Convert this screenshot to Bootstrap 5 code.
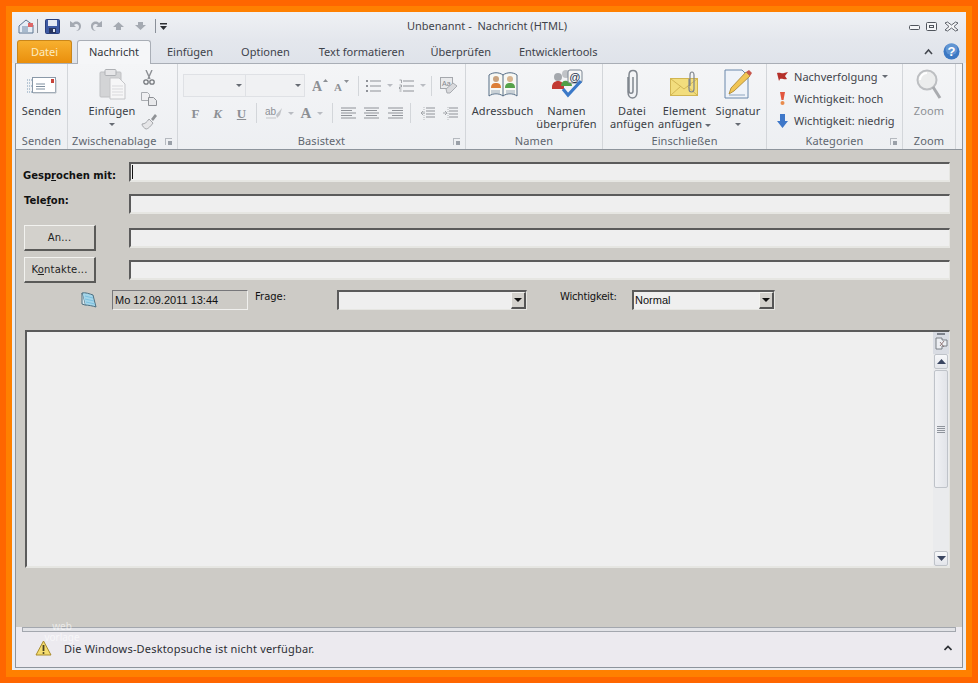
<!DOCTYPE html>
<html lang="de">
<head>
<meta charset="utf-8">
<title>Unbenannt - Nachricht (HTML)</title>
<link href="https://cdn.jsdelivr.net/npm/bootstrap@5.3.0/dist/css/bootstrap.min.css" rel="stylesheet">
<style>
html,body{height:100%;margin:0;overflow:hidden}
body{background:#ff6600;padding:6px;font-family:"Noto Sans",sans-serif;font-size:11px;line-height:13px;color:#3a3e45}
.frame2{background:#ff8000;padding:6px;height:671px;width:966px}
.wnd{height:658px;width:954px;background:#e9ecf1;position:relative;overflow:hidden}
.ttl{height:28px;background:linear-gradient(#eff1f4,#e4e7ed);padding-left:6px;padding-right:7px;position:relative}
.ttl-text{position:absolute;left:0;right:0;top:7px;text-align:center;font-size:11px;color:#3f434a;padding-right:4px}
.tabs{height:23px;background:linear-gradient(#e4e7ed,#dfe3ea);padding-left:5px;padding-right:5px;position:relative}
.tb{color:#3e424a;height:23px;line-height:24px;white-space:nowrap;font-size:11px}
.tb-file{width:55px;text-align:center;background:linear-gradient(#f7b02f,#ea8f0c);border:1px solid #c9861a;border-bottom:0;border-radius:3px 3px 0 0;color:#fcecc0;line-height:22px}
.tb-on{width:74px;margin-left:5px;text-align:center;background:#f5f6f8;border:1px solid #a9aeb6;border-bottom:0;border-radius:3px 3px 0 0;height:24px;position:relative;z-index:2;color:#33363c;line-height:22px}
.mainbox{margin:0 3px;height:605px;border:1px solid #8d949c;border-top-color:#a9aeb6;background:#eceaef}
.rib{height:86px;background:linear-gradient(#f4f5f7,#edeff2);border-bottom:1px solid #8d949c}
.grp{height:85px;border-right:1px solid #d3d6da;position:relative;flex:none}
.grp-body{height:67px}
.grp-pad{padding-top:10px}
.grp-lbl{height:18px;line-height:19px;text-align:center;color:#60666f;letter-spacing:.1px;white-space:nowrap}
.launch{position:absolute;right:5px;bottom:4px;width:7px;height:7px;border:1px solid #b5b9bf;border-width:1px 0 0 1px}
.launch::after{content:"";position:absolute;right:0;bottom:0;width:4px;height:4px;background:#9aa0a8}
.big{display:flex;flex-direction:column;align-items:center;text-align:center;position:relative;letter-spacing:.12px;flex:none;white-space:nowrap}
.big-ico{height:40px;padding-top:5px;display:flex;justify-content:center;align-items:flex-start}
.big-t{line-height:13px}
.caret-g{display:inline-block;width:0;height:0;border:3px solid transparent;border-top:3px solid #666b73;border-bottom:0;vertical-align:middle}
.caret-l{border-top-color:#b9bcc2}
.cg1{width:52px}.cg2{width:110px}.cg3{width:288px}.cg4{width:137px}.cg5{width:164px}.cg6{width:136px}.cg7{width:53px}
.rowa{height:23px;padding-left:5px}
.rowb{height:20px;margin-top:6px;padding-left:5px}
.combo{height:23px;background:#f0f1f3;border:1px solid #dfe1e5;position:relative;flex:none}
.combo .caret-g{position:absolute;right:3px;top:9px}
.sepv{width:1px;height:20px;background:#d3d6da;flex:none}
.fmt{font-family:"Liberation Serif",serif;font-weight:700;color:#8c8f94;font-size:13px;text-align:center;flex:none}
.cat{height:22px;padding-left:9px;letter-spacing:.02px;white-space:nowrap;color:#3f434a}
.cat svg{margin-right:5px;flex:none}
.frm{height:477px;background:#cdcbc6;padding:12px 12px 0 7px;font-family:"DejaVu Sans",sans-serif;font-size:10px;color:#111;flex:none}
.lbl-b{width:106px;font-weight:700;font-size:10px;flex:none;white-space:nowrap}
.sunk{height:20px;background:#efefef;border:2px solid;border-color:#5b5b5b #e6e6e2 #e6e6e2 #5b5b5b;border-width:2px 1px 2px 2px;flex:1 1 auto;position:relative}
.rw{display:flex;align-items:center}
.rw1{height:20px;margin-bottom:12px}
.rw2{height:20px;margin-bottom:11px}
.rw3{height:26px;margin-bottom:6px}
.rw5{height:20px;margin-top:7px;position:relative}
.pbtn{width:72px;height:26px;background:#d3d1cc;border:1px solid;border-color:#f2f2ef #5a5a58 #5a5a58 #f2f2ef;border-width:1px 2px 2px 1px;margin:0 33px 0 1px;text-align:center;line-height:20px;color:#222;flex:none;padding:0;font-size:10px;letter-spacing:.2px;font-family:"DejaVu Sans",sans-serif}
.date-f{width:136px;height:20px;margin-left:15px;background:#cdcbc6;border:1px solid;border-color:#77777a #f0f0ee #f0f0ee #77777a;padding:3px 2px;line-height:13px;white-space:nowrap;flex:none;font-family:"Liberation Sans",sans-serif;font-size:11px}
.sel{height:20px;flex:none;position:relative;background:#efefef;border:2px solid;border-color:#5b5b5b #e6e6e2 #e6e6e2 #5b5b5b;border-width:2px 1px 1px 2px;padding:1px;line-height:14px;font-family:"Liberation Sans",sans-serif;font-size:11px}
.sel-b{position:absolute;right:0;top:0;bottom:0;width:15px;background:#d3d1cc;border:1px solid;border-color:#f2f2ef #555 #555 #f2f2ef;border-width:1px 2px 2px 1px;display:flex;align-items:center;justify-content:center}
.sel-b i{display:block;width:0;height:0;border:4px solid transparent;border-top:4px solid #111;border-bottom:0}
.edit{height:238px;margin:20px 0 0 2px;background:#efefef;border:2px solid;border-color:#5b5b5b #e6e6e2 #e6e6e2 #5b5b5b;border-width:2px 1px 2px 2px;display:flex;justify-content:flex-end}
.sbar{width:16px;background:#eaebed;display:flex;flex-direction:column;align-items:center}
.sb-top{width:16px;height:22px;background:#d9dce3;display:flex;flex-direction:column;align-items:center;padding-top:1px;gap:2px;flex:none}
.sb-dash{width:8px;height:2px;background:#7e838c}
.sb-btn{width:14px;height:15px;border:1px solid #bfc3c9;border-radius:2px;background:linear-gradient(#f7f8fa,#e3e5ea);display:flex;align-items:center;justify-content:center;flex:none}
.sb-thumb{width:14px;height:118px;margin-top:1px;border:1px solid #bfc3c9;border-radius:2px;background:linear-gradient(90deg,#f0f1f4,#e2e4e9);display:flex;align-items:center;justify-content:center;flex:none}
.sb-track{flex:1 1 auto}
.ftr{height:40px;background:#eceaef;position:relative;font-size:11px;line-height:11px;color:#2c2f34;letter-spacing:.18px}
.ftr-bar{height:5px;margin:0 6px;background:#e2e3e7;border:1px solid #a3a7ae}
.ftr-in{padding:2px 10px 0 19px;height:30px}
.wm{position:absolute;left:25px;top:609px;width:50px;text-align:center;color:#fff;opacity:.6;font-size:10px;line-height:11px;z-index:3}
</style>
</head>
<body>
<div class="frame2">
<div class="wnd d-flex flex-column">

  <div class="ttl d-flex align-items-center justify-content-between">
    <div class="d-flex align-items-center">
      <svg width="17" height="17" viewBox="0 0 17 17"><path d="M1 8 8 2l7 5v8H1z" fill="#e6edf5" stroke="#5d7591"/><path d="M4 9h6M4 11h6M4 13h6" stroke="#6b87a6"/><rect x="10" y="5" width="5" height="4" fill="#d66"/></svg>
      <svg style="margin-left:2px" width="1" height="14" viewBox="0 0 1 14"><rect width="1" height="14" fill="#8a9099"/></svg>
      <svg style="margin-left:7px" width="15" height="15" viewBox="0 0 15 15"><rect x=".5" y=".5" width="14" height="14" rx="1" fill="#3d59a3" stroke="#2a3f7c"/><rect x="3" y="1" width="9" height="6" fill="#e4e9f4"/><rect x="4" y="9" width="7" height="5" fill="#27345f"/><rect x="8" y="10" width="2" height="3" fill="#dfe5f2"/></svg>
      <svg style="margin-left:8px" width="14" height="14" viewBox="0 0 14 14"><path d="M2 2v6h6L6 6c2-2 5-1 5 2 0 2-1 3-3 4 4 0 5-3 5-5 0-4-5-6-8-3z" fill="#a5aab2"/></svg>
      <svg style="margin-left:8px" width="14" height="14" viewBox="0 0 14 14"><path d="M12 2v6H6l2-2C6 4 3 5 3 8c0 2 1 3 3 4-4 0-5-3-5-5 0-4 5-6 8-3z" fill="#a5aab2"/></svg>
      <svg style="margin-left:8px" width="13" height="12" viewBox="0 0 13 12"><path d="M6.500 2 12 7H9v3H4V7H1z" fill="#a5aab2"/></svg>
      <svg style="margin-left:9px" width="13" height="12" viewBox="0 0 13 12"><path d="M6.500 10 12 5H9V2H4v3H1z" fill="#a5aab2"/></svg>
      <svg style="margin-left:8px" width="1" height="14" viewBox="0 0 1 14"><rect width="1" height="14" fill="#8a9099"/></svg>
      <svg style="margin-left:4px" width="7" height="7" viewBox="0 0 7 7"><rect y="0" width="7" height="1.500" fill="#2d2f33"/><path d="M0 3h7L3.500 7z" fill="#2d2f33"/></svg>
    </div>
    <div class="ttl-text">Unbenannt -&nbsp; Nachricht (HTML)</div>
    <div class="d-flex align-items-center" style="gap:6px;position:relative">
      <svg width="11" height="11" viewBox="0 0 11 11"><rect x=".5" y="4.500" width="10" height="4" rx="1" fill="#f4f5f7" stroke="#50555d"/></svg>
      <svg width="12" height="11" viewBox="0 0 12 11"><rect x=".5" y="1.500" width="10" height="8" rx="1" fill="#f4f5f7" stroke="#50555d"/><rect x="3.500" y="4.500" width="4" height="2" fill="none" stroke="#50555d"/></svg>
      <svg width="15" height="11" viewBox="0 0 15 11"><path d="M1 2 3.500 1 7.500 4 11.500 1 14 2 10 5.500 14 9 11.500 10 7.500 7 3.500 10 1 9 5 5.500z" fill="#f4f5f7" stroke="#50555d" stroke-width=".9"/></svg>
    </div>
  </div>

  <div class="tabs d-flex">
    <div class="tb tb-file">Datei</div>
    <div class="tb tb-on">Nachricht</div>
    <div class="tb" style="margin-left:16px">Einfügen</div>
    <div class="tb" style="margin-left:28px">Optionen</div>
    <div class="tb" style="margin-left:29px">Text formatieren</div>
    <div class="tb" style="margin-left:26px">Überprüfen</div>
    <div class="tb" style="margin-left:28px">Entwicklertools</div>
    <div class="ms-auto d-flex align-items-center" style="gap:10px;margin-right:1px;margin-top:-1px">
      <svg width="9" height="7" viewBox="0 0 9 7"><path d="M1 6 4.500 2 8 6" fill="none" stroke="#44484f" stroke-width="1.600"/></svg>
      <svg width="17" height="17" viewBox="0 0 17 17"><circle cx="8.500" cy="8.500" r="8" fill="#3c78c3"/><circle cx="8.500" cy="6" r="6" fill="#7aa9dd" opacity=".6"/><text x="8.500" y="13" text-anchor="middle" font-family="Liberation Sans" font-weight="700" font-size="13" fill="#fff">?</text></svg>
    </div>
  </div>

  <div class="mainbox">
    <div class="rib d-flex">

      <div class="grp cg1">
        <div class="grp-body d-flex justify-content-center">
          <div class="big">
            <div class="big-ico" style="padding-top:13px"><svg width="30" height="18" viewBox="0 0 30 18"><path d="M0 3h5M0 6h4M0 9h5M0 12h4M0 15h5" stroke="#7d9bb5" stroke-dasharray="1 1"/><rect x="5.500" y=".5" width="23" height="15" fill="#fff" stroke="#8a99a8"/><path d="M6 16h23V3" fill="none" stroke="#b8bfc6"/><path d="M9 7h9M9 9.500h9M9 12h9" stroke="#7f8f9f"/><rect x="24" y="2" width="3" height="4" fill="#c8443a"/></svg></div>
            <div class="big-t">Senden</div>
          </div>
        </div>
        <div class="grp-lbl">Senden</div>
      </div>

      <div class="grp cg2">
        <div class="grp-body d-flex" style="padding-left:20px">
          <div class="big" style="width:48px">
            <div class="big-ico"><svg width="27" height="31" viewBox="0 0 27 31"><rect x="1" y="3" width="21" height="25" rx="1" fill="#d3d4d6" stroke="#bfc0c3"/><rect x="6" y="0.500" width="11" height="6" rx="1" fill="#e6e6e8" stroke="#aeb0b4"/><path d="M11 9h9l6 6v15H11z" fill="#f6f6f7" stroke="#c5c6c9"/><path d="M13 17h11M13 20h11M13 23h11M13 26h11" stroke="#d9d9dc"/></svg></div>
            <div class="big-t">Einfügen</div>
            <div style="height:13px;line-height:11px"><span class="caret-g"></span></div>
          </div>
          <div class="d-flex flex-column align-items-center" style="width:26px;padding-top:6px;gap:7px">
            <svg width="12" height="15" viewBox="0 0 12 15"><path d="M3 0 7 9M9 0 5 9" stroke="#8c8f94" stroke-width="1.400"/><circle cx="3" cy="12" r="2.200" fill="none" stroke="#75787d" stroke-width="1.300"/><circle cx="9" cy="12" r="2.200" fill="none" stroke="#75787d" stroke-width="1.300"/></svg>
            <svg width="16" height="14" viewBox="0 0 16 14"><path d="M.5.5h6l2 2v6H.5z" fill="#f0f0f2" stroke="#a9acb1"/><path d="M7.500 5.500h5l3 3v5h-8z" fill="#e8e9eb" stroke="#8d9095"/></svg>
            <svg width="17" height="17" viewBox="0 0 17 17"><path d="M1 11c3 0 5-2 7-5l4 4c-2 3-5 6-7 6-2-1-4-3-4-5z" fill="#e6e6e8" stroke="#a5a7ab"/><path d="m10 6 4-5 2 2-4 5z" fill="#8f9296"/></svg>
          </div>
        </div>
        <div class="grp-lbl text-start" style="padding-left:4px">Zwischenablage</div>
        <span class="launch"></span>
      </div>

      <div class="grp cg3">
        <div class="grp-body grp-pad">
          <div class="rowa d-flex align-items-center">
            <div class="combo" style="width:63px"><span class="caret-g"></span></div>
            <div class="combo" style="width:59px;border-left:0"><span class="caret-g"></span></div>
            <svg style="margin-left:7px" width="16" height="15" viewBox="0 0 16 15"><text x="0" y="13" font-family="Liberation Serif" font-weight="700" font-size="14" fill="#8c8f94">A</text><path d="m11 4 2.500-3L16 4z" fill="#8c8f94"/></svg>
            <svg style="margin-left:6px" width="15" height="13" viewBox="0 0 15 13"><text x="0" y="12" font-family="Liberation Serif" font-weight="700" font-size="11" fill="#8c8f94">A</text><path d="m10 1 2.500 3L15 1z" fill="#8c8f94"/></svg>
            <span class="sepv" style="margin-left:9px"></span>
            <svg style="margin-left:7px" width="15" height="14" viewBox="0 0 15 14"><path d="M0 2h2M0 7h2M0 12h2" stroke="#8f9298" stroke-width="2"/><path d="M4 2h11M4 7h11M4 12h11" stroke="#8f9298"/></svg>
            <span class="caret-g caret-l" style="margin-left:6px"></span>
            <svg style="margin-left:6px" width="15" height="14" viewBox="0 0 15 14"><path d="M.5 1h2v3M.5 6h2v2h-2v2h2M.5 12h2" fill="none" stroke="#8f9298" stroke-width=".8"/><path d="M4 2h11M4 7h11M4 12h11" stroke="#8f9298"/></svg>
            <span class="caret-g caret-l" style="margin-left:6px"></span>
            <span class="sepv" style="margin-left:5px"></span>
            <svg style="margin-left:8px" width="18" height="17" viewBox="0 0 18 17"><rect x=".5" y=".5" width="12" height="11" fill="#e9eaec" stroke="#a5a8ad"/><text x="2" y="9" font-family="Liberation Sans" font-size="7" fill="#84878c">Aa</text><path d="m6 12 7-6 4 3-7 7H7z" fill="#d9dadd" stroke="#a8abb0"/></svg>
          </div>
          <div class="rowb d-flex align-items-center">
            <span class="fmt" style="width:11px;margin-left:7px">F</span>
            <span class="fmt" style="width:11px;margin-left:11px;font-style:italic">K</span>
            <span class="fmt" style="width:11px;margin-left:13px;text-decoration:underline">U</span>
            <span class="sepv" style="margin-left:9px"></span>
            <svg style="margin-left:8px" width="18" height="14" viewBox="0 0 18 14"><text x="0" y="9" font-family="Liberation Sans" font-size="10" fill="#8d9096">ab</text><path d="m11 9 6-7-2 7-3 3z" fill="#c3c5c9"/><path d="M1 12h10" stroke="#c3c5c9"/></svg>
            <span class="caret-g caret-l" style="margin-left:5px"></span>
            <span class="fmt" style="width:12px;margin-left:6px;font-size:15px">A</span>
            <span class="caret-g caret-l" style="margin-left:5px"></span>
            <span class="sepv" style="margin-left:9px"></span>
            <svg style="margin-left:8px" width="15" height="12" viewBox="0 0 15 12"><path d="M0 1h15M0 3.500h11M0 6h15M0 8.500h11M0 11h15" stroke="#8f9298"/></svg>
            <svg style="margin-left:8px" width="15" height="12" viewBox="0 0 15 12"><path d="M0 1h15M2 3.500h11M0 6h15M2 8.500h11M0 11h15" stroke="#8f9298"/></svg>
            <svg style="margin-left:9px" width="15" height="12" viewBox="0 0 15 12"><path d="M0 1h15M4 3.500h11M0 6h15M4 8.500h11M0 11h15" stroke="#8f9298"/></svg>
            <span class="sepv" style="margin-left:7px"></span>
            <svg style="margin-left:9px" width="15" height="15" viewBox="0 0 15 15"><path d="M6 2h9M6 5h9M6 8h9M6 11h9" stroke="#8f9298"/><path d="M5 7H1M3 5 1 7l2 2" fill="none" stroke="#a3a6ab"/><path d="M4 1v13" stroke="#b5b8bc" stroke-dasharray="1 1"/></svg>
            <svg style="margin-left:8px" width="15" height="15" viewBox="0 0 15 15"><path d="M6 2h9M6 5h9M6 8h9M6 11h9" stroke="#8f9298"/><path d="M0 7h4M2 5l2 2-2 2" fill="none" stroke="#a3a6ab"/><path d="M5 1v13" stroke="#b5b8bc" stroke-dasharray="1 1"/></svg>
          </div>
        </div>
        <div class="grp-lbl">Basistext</div>
        <span class="launch"></span>
      </div>

      <div class="grp cg4">
        <div class="grp-body d-flex" style="padding-left:6px">
          <div class="big" style="width:61px">
            <div class="big-ico" style="padding-top:7px"><svg width="30" height="27" viewBox="0 0 30 27"><path d="M1 4c4-3 10-3 14 0 4-3 10-3 14 0v21c-4-3-10-3-14 0-4-3-10-3-14 0z" fill="#f7f8f4" stroke="#546c85"/><path d="M15 4v21" stroke="#546c85"/><circle cx="8" cy="8" r="3" fill="#c9a27e"/><path d="M3 17c0-4 2-5 5-5s5 1 5 5z" fill="#dd7f36"/><circle cx="22" cy="8" r="3" fill="#d8b48f"/><path d="M17 17c0-4 2-5 5-5s5 1 5 5z" fill="#55a24a"/><path d="M3 20h9M3 22h9M18 20h9M18 22h9" stroke="#9aa9b8"/></svg></div>
            <div class="big-t">Adressbuch</div>
          </div>
          <div class="big" style="width:63px;margin-left:2px">
            <div class="big-ico"><svg width="32" height="29" viewBox="0 0 32 29"><circle cx="7" cy="8" r="4" fill="#a4a8ad"/><circle cx="15" cy="5" r="4" fill="#c0c3c7"/><path d="M1 18c0-4 3-6 6-6s6 2 6 6v2H1z" fill="#c23a33"/><path d="M10 17c0-4 3-6 6-5s5 2 5 5z" fill="#4f9e46"/><rect x="17" y="1" width="14" height="13" rx="2" fill="#f7f7f7" stroke="#7b8591"/><text x="24" y="11.500" text-anchor="middle" font-family="Liberation Sans" font-weight="700" font-size="11" fill="#2b3a54">@</text><path d="m12 20 5 6L30 12" fill="none" stroke="#3b79c8" stroke-width="3.200"/></svg></div>
            <div class="big-t">Namen<br>überprüfen</div>
          </div>
        </div>
        <div class="grp-lbl">Namen</div>
      </div>

      <div class="grp cg5">
        <div class="grp-body d-flex" style="padding-left:5px">
          <div class="big" style="width:48px">
            <div class="big-ico"><svg width="16" height="31" viewBox="0 0 16 31"><path d="M4 8v15c0 8 9 8 9 0V6c0-6-8-6-8 0v16c0 3 4 3 4 0V8" fill="none" stroke="#80868e" stroke-width="1.500"/></svg></div>
            <div class="big-t">Datei<br>anfügen</div>
          </div>
          <div class="big" style="width:55px;margin-left:1px">
            <div class="big-ico" style="padding-top:7px"><svg width="30" height="26" viewBox="0 0 30 26"><rect x=".5" y="7.500" width="27" height="17" fill="#f2dd7d" stroke="#d1b551"/><path d="m1 8 13 10L27 8M1 24l10-9M27 24l-10-9" fill="none" stroke="#d2b655"/><path d="M19 8v10c0 4 5 4 5 0V4c0-4-4-4-4 0v11" fill="none" stroke="#7f858d" stroke-width="1.200"/></svg></div>
            <div class="big-t">Element<br>anfügen <span class="caret-g"></span></div>
          </div>
          <div class="big" style="width:50px;margin-left:1px">
            <div class="big-ico"><svg width="29" height="30" viewBox="0 0 29 30"><path d="M1 1h17l6 6v22H1z" fill="#eff3f9" stroke="#6b88ab"/><path d="m5 25 2-6L22 3l4 4L10 22z" fill="#f0c555" stroke="#a7812d" stroke-width=".8"/><path d="m22 3 4 4 2-3-3-3z" fill="#c7584e"/><path d="M5 26h16" stroke="#8fa5bf"/></svg></div>
            <div class="big-t">Signatur</div>
            <div style="height:13px;line-height:11px"><span class="caret-g"></span></div>
          </div>
        </div>
        <div class="grp-lbl">Einschließen</div>
      </div>

      <div class="grp cg6">
        <div class="grp-body" style="padding-top:1px">
          <div class="cat d-flex align-items-center"><svg width="13" height="11" viewBox="0 0 13 11"><path d="M3 10 1 2c3-1 5 1 7 0l4-1-3 4 2 3c-3 1-5-1-7 0z" fill="#b5302a"/></svg>Nachverfolgung<span class="caret-g ms-1"></span></div>
          <div class="cat d-flex align-items-center"><svg width="13" height="15" viewBox="0 0 13 15"><path d="M4 1h5L7.500 9h-2z" fill="#e2563f"/><circle cx="6.500" cy="12" r="2" fill="#e98b4c"/></svg>Wichtigkeit: hoch</div>
          <div class="cat d-flex align-items-center"><svg width="13" height="15" viewBox="0 0 13 15"><path d="M4 1h5v7h3l-5.500 7L1 8h3z" fill="#3f78c9"/></svg>Wichtigkeit: niedrig</div>
        </div>
        <div class="grp-lbl">Kategorien</div>
        <span class="launch"></span>
      </div>

      <div class="grp cg7">
        <div class="grp-body d-flex justify-content-center">
          <div class="big" style="color:#8d9095">
            <div class="big-ico"><svg width="26" height="31" viewBox="0 0 26 31"><circle cx="11" cy="11" r="9.500" fill="#eceded" stroke="#bdbfc2" stroke-width="2"/><path d="M4 11a7 7 0 0 1 7-7" fill="none" stroke="#fff" stroke-width="2"/><path d="m17 18 7 11" stroke="#a9abaf" stroke-width="3"/></svg></div>
            <div class="big-t">Zoom</div>
          </div>
        </div>
        <div class="grp-lbl">Zoom</div>
      </div>
    </div>

    <div class="frm">
      <div class="rw rw1"><div class="lbl-b" style="padding-top:6px">Gesp<u>r</u>ochen mit:</div><div class="sunk"><svg width="1" height="14" viewBox="0 0 1 14" style="display:block;margin:1px 0 0 1px"><rect width="1" height="14" fill="#111"/></svg></div></div>
      <div class="rw rw2"><div class="lbl-b" style="margin-top:-7px;padding-left:1px">Tele<u>f</u>on:</div><div class="sunk"></div></div>
      <div class="rw rw3"><button type="button" class="pbtn">An...</button><div class="sunk"></div></div>
      <div class="rw rw3"><button type="button" class="pbtn">K<u>o</u>ntakte...</button><div class="sunk"></div></div>
      <div class="rw rw5">
        <svg style="margin-left:58px;flex:none" width="16" height="16" viewBox="0 0 16 16"><path d="M1 1c3-1 8 1 11 2l3 12c-3-1-8-2-11-2z" fill="#a5d6ea" stroke="#4d6f80"/><path d="M1 1v11l3 1" fill="#d9e8ee" stroke="#4d6f80"/><path d="M4 4l8 2M4 7l9 2M5 10l9 2" stroke="#7cc0df"/></svg>
        <div class="date-f">Mo 12.09.2011 13:44</div>
        <div style="width:82px;margin-left:7px;margin-top:-7px;flex:none">Frage:</div>
        <div class="sel" style="width:190px"><span class="sel-b"><i></i></span></div>
        <div style="width:72px;margin-left:33px;margin-top:-7px;flex:none;white-space:nowrap;letter-spacing:-.2px">Wichtigkeit:</div>
        <div class="sel" style="width:143px">Normal<span class="sel-b"><i></i></span></div>
      </div>
      <div class="edit">
        <div class="sbar">
          <div class="sb-top"><span class="sb-dash"></span><svg width="13" height="13" viewBox="0 0 13 13"><path d="M1 1h6v2h5v6H7v3H1z" fill="#eceef2" stroke="#6f747c" stroke-width=".9"/><path d="m5 5 4 5M9 4 5 9" stroke="#8a6f6f" stroke-width=".9"/></svg></div>
          <div class="sb-btn"><svg width="9" height="5" viewBox="0 0 9 5"><path d="M0 5 4.500 0 9 5z" fill="#3a4560"/></svg></div>
          <div class="sb-thumb"><svg width="8" height="7" viewBox="0 0 8 7"><path d="M0 .5h8M0 2.500h8M0 4.500h8M0 6.500h8" stroke="#8f949c"/></svg></div>
          <div class="sb-track"></div>
          <div class="sb-btn"><svg width="9" height="5" viewBox="0 0 9 5"><path d="M0 0 4.500 5 9 0z" fill="#3a4560"/></svg></div>
        </div>
      </div>
    </div>

    <div class="ftr">
      <div class="ftr-bar"></div>
      <div class="ftr-in d-flex align-items-center">
        <svg width="17" height="16" viewBox="0 0 17 16"><path d="M8.500 1 16 15H1z" fill="#f4dc6e" stroke="#a88a2a"/><path d="M8.500 5v6" stroke="#4a4020" stroke-width="1.800"/><circle cx="8.500" cy="13" r="1" fill="#4a4020"/></svg>
        <span style="margin-left:12px">Die Windows-Desktopsuche ist nicht verfügbar.</span>
        <svg class="ms-auto" width="8" height="6" viewBox="0 0 8 6"><path d="M.5 5 4 1.500 7.500 5" fill="none" stroke="#2c2f34" stroke-width="1.700"/></svg>
      </div>
    </div>
  </div>
  <div class="wm">web<br>vorlage</div>
</div>
</div>
</body>
</html>
